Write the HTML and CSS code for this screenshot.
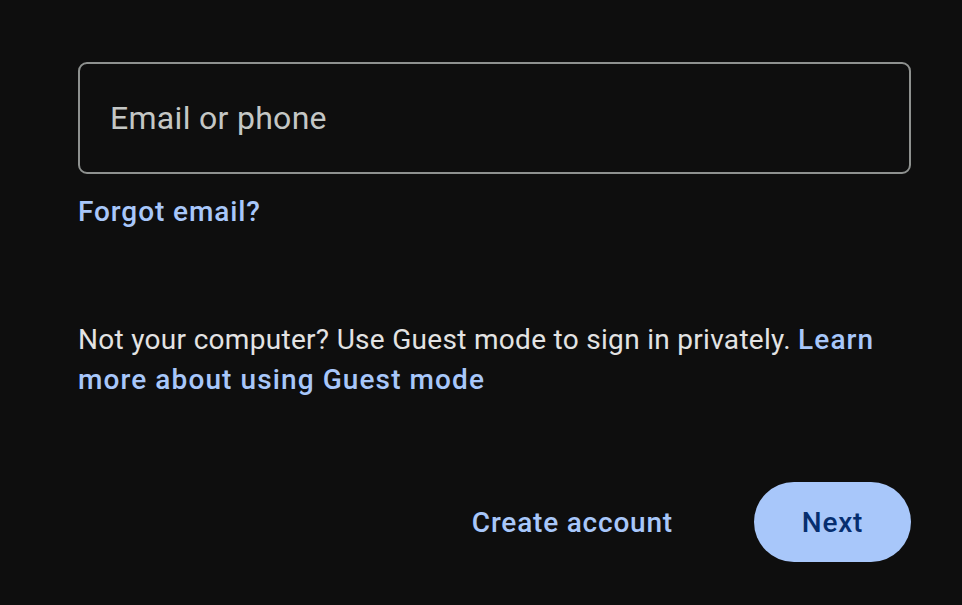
FILE: index.html
```html
<!DOCTYPE html>
<html lang="en">
<head>
<meta charset="utf-8">
<link rel="stylesheet" href="styles.css">
</head>
<body>
<main class="form">
  <div class="field">
    <input class="input" type="text" placeholder="Email or phone">
  </div>
  <a class="link forgot" href="#">Forgot email?</a>
  <p class="note">Not your computer? Use Guest mode to sign in privately. <a class="link" href="#">Learn more about using Guest mode</a></p>
  <div class="actions">
    <button class="btn-text" type="button">Create account</button>
    <button class="btn-fill" type="button">Next</button>
  </div>
</main>
</body>
</html>
```
FILE: styles.css
```css
html, body {
  margin: 0;
  padding: 0;
  background: #0e0e0e;
  height: 100%;
}
body {
  font-family: Roboto, "Noto Sans", sans-serif;
  color: #e3e3e3;
}
.form {
  width: 833px;
  padding: 62px 0 0 78px;
}
.field {
  height: 112px;
  box-sizing: border-box;
  border: 2px solid #8e918f;
  border-radius: 9px;
  display: flex;
  align-items: center;
}
.input {
  flex: 1;
  background: transparent;
  border: 0;
  outline: none;
  padding: 0 0 0 30px;
  font-family: inherit;
  font-size: 32px;
  letter-spacing: 0.3px;
  color: #e3e3e3;
}
.input::placeholder {
  color: #c4c7c5;
}
.link {
  color: #a8c7fa;
  font-weight: 500;
  text-decoration: none;
  letter-spacing: 0.9px;
}
.note .link {
  letter-spacing: 1.1px;
}
.forgot {
  display: inline-block;
  margin-top: 20px;
  font-size: 28px;
  line-height: 36px;
}
.note {
  margin: 90px 0 0;
  font-size: 28px;
  line-height: 40px;
  letter-spacing: 0.3px;
}
.actions {
  display: flex;
  justify-content: flex-end;
  align-items: center;
  gap: 81px;
  margin-top: 82px;
}
.btn-text, .btn-fill {
  font-family: inherit;
  font-size: 28px;
  font-weight: 500;
  border: 0;
  cursor: pointer;
  letter-spacing: 0.8px;
}
.btn-text {
  background: transparent;
  color: #a8c7fa;
  padding: 0 24px;
  height: 80px;
  margin-right: -24px;
}
.btn-fill {
  background: #a8c7fa;
  color: #062e6f;
  height: 80px;
  width: 157px;
  border-radius: 40px;
}
```
